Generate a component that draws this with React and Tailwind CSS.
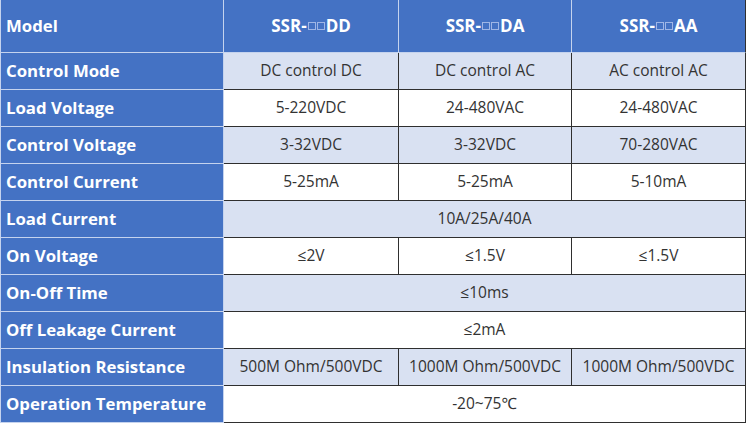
import React from "react";

const LIGHT = "bg-[#d9e1f2]";
const WHITE = "bg-white";

const rows = [
  { label: "Control Mode", cells: ["DC control DC", "DC control AC", "AC control AC"], bg: LIGHT },
  { label: "Load Voltage", cells: ["5-220VDC", "24-480VAC", "24-480VAC"], bg: WHITE },
  { label: "Control Voltage", cells: ["3-32VDC", "3-32VDC", "70-280VAC"], bg: LIGHT },
  { label: "Control Current", cells: ["5-25mA", "5-25mA", "5-10mA"], bg: WHITE },
  { label: "Load Current", span: "10A/25A/40A", bg: LIGHT },
  { label: "On Voltage", cells: ["≤2V", "≤1.5V", "≤1.5V"], bg: WHITE },
  { label: "On-Off Time", span: "≤10ms", bg: LIGHT },
  { label: "Off Leakage Current", span: "≤2mA", bg: WHITE },
  { label: "Insulation Resistance", cells: ["500M Ohm/500VDC", "1000M Ohm/500VDC", "1000M Ohm/500VDC"], bg: LIGHT },
  { label: "Operation Temperature", span: "-20~75℃", bg: WHITE },
];

function Boxes() {
  return (
    <span className="inline-flex items-center gap-[1px] mx-[1px] align-middle">
      <span className="inline-block w-[8px] h-[8px] border border-[#9fb6e6]"></span>
      <span className="inline-block w-[8px] h-[8px] border border-[#9fb6e6]"></span>
    </span>
  );
}

export default function App() {
  return (
    <div className="w-[750px] h-[426px] bg-white" style={{ fontFamily: '"Open Sans", "Noto Sans", sans-serif' }}>
      <div className="grid grid-cols-[224px_175px_173px_174px] grid-rows-[53px_repeat(10,37px)] w-[746px]">
        {/* header */}
        <div className="bg-[#4472c4] border-l border-l-[#c5d3ee] border-r border-r-[#c5d3ee] border-b border-b-[#c5d3ee] flex items-center pl-[5px] text-white font-bold text-[16.8px]">
          Model
        </div>
        {["DD", "DA", "AA"].map((s, i) => (
          <div
            key={s}
            className={
              "bg-[#4472c4] border-b border-b-[#c5d3ee] flex items-center justify-center text-white font-bold text-[17px] " +
              (i < 2 ? "border-r border-r-[#c5d3ee]" : "border-r border-r-[#2f2f2f]")
            }
          >
            <span className="flex items-center">
              SSR-<Boxes />
              {s}
            </span>
          </div>
        ))}
        {rows.map((r) => (
          <React.Fragment key={r.label}>
            <div className="bg-[#4472c4] border-l border-l-[#c5d3ee] border-r border-r-[#c5d3ee] border-b border-b-[#c5d3ee] flex items-center pl-[5px] text-white font-bold text-[16.8px] whitespace-nowrap">
              {r.label}
            </div>
            {r.span ? (
              <div className={r.bg + " col-span-3 border-r border-b border-[#2f2f2f] flex items-center justify-center text-[#333333] text-[15.5px]"}>
                {r.span}
              </div>
            ) : (
              r.cells.map((c, ci) => (
                <div
                  key={ci}
                  className={r.bg + " border-r border-b border-[#2f2f2f] flex items-center justify-center text-[#333333] text-[15.5px] whitespace-nowrap"}
                >
                  {c}
                </div>
              ))
            )}
          </React.Fragment>
        ))}
      </div>
    </div>
  );
}
